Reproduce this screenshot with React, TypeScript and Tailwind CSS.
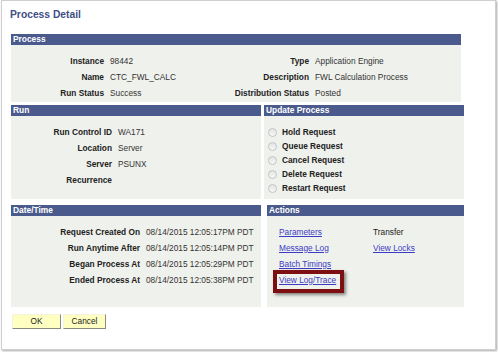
import type { ReactNode } from "react";

const processLeft = [
  ["Instance", "98442"],
  ["Name", "CTC_FWL_CALC"],
  ["Run Status", "Success"],
];
const processRight = [
  ["Type", "Application Engine"],
  ["Description", "FWL Calculation Process"],
  ["Distribution Status", "Posted"],
];
const runRows = [
  ["Run Control ID", "WA171"],
  ["Location", "Server"],
  ["Server", "PSUNX"],
  ["Recurrence", ""],
];
const dateRows = [
  ["Request Created On", "08/14/2015 12:05:17PM PDT"],
  ["Run Anytime After", "08/14/2015 12:05:14PM PDT"],
  ["Began Process At", "08/14/2015 12:05:29PM PDT"],
  ["Ended Process At", "08/14/2015 12:05:38PM PDT"],
];
const updateOptions = ["Hold Request", "Queue Request", "Cancel Request", "Delete Request", "Restart Request"];

function Header({ children }: { children: ReactNode }) {
  return (
    <div className="h-[11px] bg-[#4a5a8c] pl-[2px] text-[8.4px] leading-[11px] font-bold text-white">
      {children}
    </div>
  );
}

function Link({ children }: { children: ReactNode }) {
  return <span className="text-[#3b3bc4] underline">{children}</span>;
}

export default function App() {
  return (
    <div className="w-[498px] h-[352px] bg-white" style={{ fontFamily: '"Liberation Sans", Arial, sans-serif' }}>
      <div className="ml-px w-[495px] h-[350px] border border-[#cfcfcf] shadow-[1px_1px_2px_rgba(0,0,0,0.35)] bg-white pl-[9px] pt-[8px] text-[8.3px] text-[#333]">
        {/* Title */}
        <h1 className="-ml-px h-[12px] text-[10.3px] leading-[12px] font-bold text-[#3f4f86]">Process Detail</h1>

        {/* Process */}
        <div className="mt-[13px] w-[450px]">
          <Header>Process</Header>
          <div className="bg-[#eff1ec] pt-2 pb-px h-[57px]">
            {processLeft.map(([l, v], i) => (
              <div key={l} className="flex h-4 items-center">
                <span className="w-[93px] text-right font-bold text-[#222]">{l}</span>
                <span className="ml-[6px] w-[90px]">{v}</span>
                <span className="ml-[6px] w-[103px] text-right font-bold text-[#222] whitespace-nowrap">{processRight[i][0]}</span>
                <span className="ml-[6px]">{processRight[i][1]}</span>
              </div>
            ))}
          </div>
        </div>

        {/* Run / Update Process */}
        <div className="mt-[3px] flex gap-[3px]">
          <div className="w-[250px]">
            <Header>Run</Header>
            <div className="bg-[#eff1ec] h-[83px] pt-2">
              {runRows.map(([l, v]) => (
                <div key={l} className="flex h-4 items-center">
                  <span className="w-[101px] text-right font-bold text-[#222]">{l}</span>
                  <span className="ml-[6px]">{v}</span>
                </div>
              ))}
            </div>
          </div>
          <div className="w-[200px]">
            <Header>Update Process</Header>
            <div className="bg-[#eff1ec] h-[83px] pt-[9px] pl-[4px]">
              {updateOptions.map((o) => (
                <div key={o} className="flex h-[14px] items-center">
                  <span className="h-[9px] w-[9px] rounded-full border border-[#c4c4c4] bg-gradient-to-b from-[#e4e4e4] to-[#f8f8f8]" />
                  <span className="ml-[5px] font-bold text-[#222]">{o}</span>
                </div>
              ))}
            </div>
          </div>
        </div>

        {/* Date/Time / Actions */}
        <div className="mt-[6px] flex gap-[6px]">
          <div className="w-[250px]">
            <Header>Date/Time</Header>
            <div className="bg-[#eff1ec] h-[91px] pt-2">
              {dateRows.map(([l, v]) => (
                <div key={l} className="flex h-4 items-center">
                  <span className="w-[129px] text-right font-bold text-[#222]">{l}</span>
                  <span className="ml-[6px] whitespace-nowrap">{v}</span>
                </div>
              ))}
            </div>
          </div>
          <div className="w-[197px]">
            <Header>Actions</Header>
            <div className="bg-[#eff1ec] h-[91px] pt-2 pl-[12px]">
              <div className="grid grid-cols-[94px_1fr] auto-rows-[16px] items-center">
                <Link>Parameters</Link>
                <span className="text-[#222]">Transfer</span>
                <Link>Message Log</Link>
                <Link>View Locks</Link>
                <Link>Batch Timings</Link>
                <span />
                <span className="relative">
                  <Link>View Log/Trace</Link>
                  <span className="absolute -left-[6px] -top-[4px] h-[23px] w-[71px] border-[4px] border-[#7d0f12] shadow-[2px_2px_3px_rgba(0,0,0,0.45)]" />
                </span>
              </div>
            </div>
          </div>
        </div>

        {/* Buttons */}
        <div className="mt-[7px] ml-px flex gap-[2px]">
          <button className="h-[15px] w-[49px] bg-[#ffffc2] border border-t-[#f4f4e0] border-l-[#f4f4e0] border-r-[#8a8a80] border-b-[#8a8a80] text-[8.3px] leading-none text-[#222]">
            OK
          </button>
          <button className="h-[15px] w-[43px] bg-[#ffffc2] border border-t-[#f4f4e0] border-l-[#f4f4e0] border-r-[#8a8a80] border-b-[#8a8a80] text-[8.3px] leading-none text-[#222]">
            Cancel
          </button>
        </div>
      </div>
    </div>
  );
}
